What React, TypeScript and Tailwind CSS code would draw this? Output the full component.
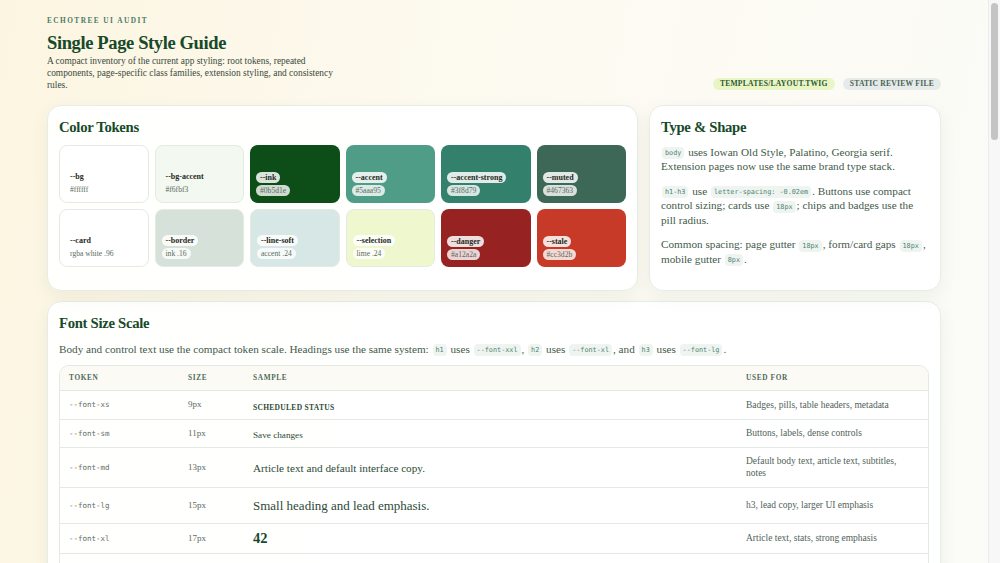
import React from "react";

const serif = "font-['Palatino_Linotype','Liberation_Serif','DejaVu_Serif',serif]";
const mono = "font-['DejaVu_Sans_Mono','Liberation_Mono',monospace]";

type Sw = { name: string; value: string; bg: string; dark?: boolean; border?: boolean };

const swatches: Sw[] = [
  { name: "--bg", value: "#ffffff", bg: "bg-[#ffffff]", border: true },
  { name: "--bg-accent", value: "#f6fbf3", bg: "bg-[#f3f8f0]", border: true },
  { name: "--ink", value: "#0b5d1e", bg: "bg-[#0d4d18]", dark: true },
  { name: "--accent", value: "#5aaa95", bg: "bg-[#4f9d87]", dark: true },
  { name: "--accent-strong", value: "#3f8d79", bg: "bg-[#33806d]", dark: true },
  { name: "--muted", value: "#467363", bg: "bg-[#3d6757]", dark: true },
  { name: "--card", value: "rgba white .96", bg: "bg-[#ffffff]", border: true },
  { name: "--border", value: "ink .16", bg: "bg-[#d6e1d9]", dark: true, border: true },
  { name: "--line-soft", value: "accent .24", bg: "bg-[#d7e7e6]", dark: true, border: true },
  { name: "--selection", value: "lime .24", bg: "bg-[#eef7cd]", dark: true, border: true },
  { name: "--danger", value: "#a12a2a", bg: "bg-[#962222]", dark: true },
  { name: "--stale", value: "#cc3d2b", bg: "bg-[#c73a28]", dark: true },
];

function Code({ children }: { children: React.ReactNode }) {
  return (
    <code
      className={`${mono} mx-[1px] inline-block rounded-[4px] bg-[#eff4f0] px-[3px] py-[2px] align-middle text-[6.8px] leading-[8px] text-[#4a8472]`}
    >
      {children}
    </code>
  );
}

function Swatch({ s }: { s: Sw }) {
  return (
    <div
      className={`${s.bg} flex h-[58px] flex-col items-start justify-end gap-[2px] rounded-[8px] px-[6px] pb-[7px] ${
        s.border ? "border border-[#e4ebe5]" : ""
      }`}
    >
      <span
        className={`rounded-full px-[4px] text-[8px] font-bold leading-[11px] text-[#1f2a22] ${
          s.dark ? "bg-white/85" : ""
        }`}
      >
        {s.name}
      </span>
      <span
        className={`rounded-full px-[4px] text-[7.6px] leading-[11px] text-[#5b6b60] ${s.dark ? "bg-white/80" : ""}`}
      >
        {s.value}
      </span>
    </div>
  );
}

const rows = [
  { token: "--font-xs", size: "9px", sample: <span className="text-[7.5px] font-bold tracking-[0.04em] text-[#2d4a35]">SCHEDULED STATUS</span>, used: "Badges, pills, table headers, metadata", h: "h-[29px]" },
  { token: "--font-sm", size: "11px", sample: <span className="text-[9.2px] text-[#2d4a35]">Save changes</span>, used: "Buttons, labels, dense controls", h: "h-[28px]" },
  { token: "--font-md", size: "13px", sample: <span className="text-[11.2px] text-[#2d4a35]">Article text and default interface copy.</span>, used: "Default body text, article text, subtitles, notes", h: "h-[40px]" },
  { token: "--font-lg", size: "15px", sample: <span className="text-[13px] text-[#2d4a35]">Small heading and lead emphasis.</span>, used: "h3, lead copy, larger UI emphasis", h: "h-[36px]" },
  { token: "--font-xl", size: "17px", sample: <span className="text-[14.5px] font-bold text-[#17492a]">42</span>, used: "Article text, stats, strong emphasis", h: "h-[30px]" },
  { token: "--font-xxl", size: "24px", sample: <span className="text-[18.5px] font-bold text-[#17492a]">Single Page Style Guide</span>, used: "h1, page titles", h: "h-[40px]" },
];

export default function App() {
  return (
    <div
      className={`${serif} min-h-[1200px] bg-[linear-gradient(100deg,#fcf5e1_0%,#fdfaf0_40%,#fafbf9_100%)] pr-[12px] text-[#3b5245]`}
    >
      <div className="mx-auto max-w-[894px] pt-[16px] pb-10">
        <header className="flex items-end justify-between">
          <div>
            <div className="text-[7.3px] font-bold tracking-[0.2em] text-[#4f7a66]">ECHOTREE UI AUDIT</div>
            <h1 className="mt-[5px] text-[18.5px] font-bold leading-[22px] tracking-[-0.02em] text-[#17492a]">
              Single Page Style Guide
            </h1>
            <p className="mt-[1px] max-w-[300px] text-[9.4px] leading-[12px] text-[#3b4a40]">
              A compact inventory of the current app styling: root tokens, repeated components, page-specific class
              families, extension styling, and consistency rules.
            </p>
          </div>
          <div className="mb-[1px] flex gap-[8px]">
            <span className="rounded-full bg-[#eaf5c6] px-[7px] py-[1px] text-[7.6px] font-bold leading-[10px] tracking-[0.03em] text-[#2c5a31]">
              TEMPLATES/LAYOUT.TWIG
            </span>
            <span className="rounded-full bg-[#e6ebe9] px-[7px] py-[1px] text-[7.6px] font-bold leading-[10px] tracking-[0.03em] text-[#4a6358]">
              STATIC REVIEW FILE
            </span>
          </div>
        </header>

        <div className="mt-[14px] grid grid-cols-[591px_minmax(0,1fr)] gap-[11px]">
          <section className="rounded-[14px] border border-[#e6ece6] bg-white/95 px-[11px] pt-[11px] pb-[23px] shadow-[0_6px_18px_rgba(30,60,40,0.06)]">
            <h2 className="text-[14.7px] font-bold leading-[20px] tracking-[-0.02em] text-[#17492a]">Color Tokens</h2>
            <div className="mt-[8px] grid grid-cols-6 gap-[6px]">
              {swatches.map((s) => (
                <Swatch key={s.name} s={s} />
              ))}
            </div>
          </section>

          <section className="rounded-[14px] border border-[#e6ece6] bg-white/95 px-[11px] pt-[11px] pb-[14px] shadow-[0_6px_18px_rgba(30,60,40,0.06)]">
            <h2 className="text-[14.7px] font-bold leading-[20px] tracking-[-0.02em] text-[#17492a]">Type &amp; Shape</h2>
            <div className="mt-[8px] flex flex-col gap-[10px] text-[11.2px] leading-[14.5px] text-[#3f5a4a]">
              <p>
                <Code>body</Code> uses Iowan Old Style, Palatino, Georgia serif. Extension pages now use the same brand
                type stack.
              </p>
              <p>
                <Code>h1-h3</Code> use <Code>letter-spacing: -0.02em</Code>. Buttons use compact control sizing; cards
                use <Code>18px</Code>; chips and badges use the pill radius.
              </p>
              <p>
                Common spacing: page gutter <Code>18px</Code>, form/card gaps <Code>18px</Code>, mobile gutter{" "}
                <Code>8px</Code>.
              </p>
            </div>
          </section>
        </div>

        <section className="mt-[10px] rounded-[14px] border border-[#e6ece6] bg-white/95 px-[11px] pt-[11px] pb-[14px] shadow-[0_6px_18px_rgba(30,60,40,0.06)]">
          <h2 className="text-[14.7px] font-bold leading-[20px] tracking-[-0.02em] text-[#17492a]">Font Size Scale</h2>
          <p className="mt-[9px] text-[11.2px] leading-[14px] text-[#3f5a4a]">
            Body and control text use the compact token scale. Headings use the same system: <Code>h1</Code> uses{" "}
            <Code>--font-xxl</Code>, <Code>h2</Code> uses <Code>--font-xl</Code>, and <Code>h3</Code> uses{" "}
            <Code>--font-lg</Code>.
          </p>
          <div className="mt-[9px] overflow-hidden rounded-[10px] border border-[#e3e9e4]">
            <table className="w-full table-fixed border-collapse">
              <colgroup>
                <col className="w-[119px]" />
                <col className="w-[65px]" />
                <col />
                <col className="w-[191px]" />
              </colgroup>
              <thead>
                <tr className="h-[24px] bg-[#fbfaf4] text-left text-[7.3px] font-bold tracking-[0.09em] text-[#4f6b5c]">
                  <th className="px-[9px]">TOKEN</th>
                  <th className="px-[9px]">SIZE</th>
                  <th className="px-[9px]">SAMPLE</th>
                  <th className="px-[9px]">USED FOR</th>
                </tr>
              </thead>
              <tbody>
                {rows.map((r) => (
                  <tr key={r.token} className={`${r.h} border-t border-[#e3e9e4]`}>
                    <td className={`${mono} px-[9px] text-[7.5px] text-[#5f6b64]`}>{r.token}</td>
                    <td className="px-[9px] text-[9px] text-[#5a6b60]">{r.size}</td>
                    <td className="px-[9px] leading-none">{r.sample}</td>
                    <td className="px-[9px] pr-[18px] text-[9.5px] leading-[12px] text-[#4f6257]">{r.used}</td>
                  </tr>
                ))}
              </tbody>
            </table>
          </div>
        </section>
      </div>

      <div className="pointer-events-none fixed top-0 right-0 h-screen w-[12px] border-l border-[#ececec] bg-[#f7f7f7]">
        <div className="mx-auto mt-[3px] h-[137px] w-[7px] rounded-full bg-[#c4c4c4]" />
      </div>
    </div>
  );
}
